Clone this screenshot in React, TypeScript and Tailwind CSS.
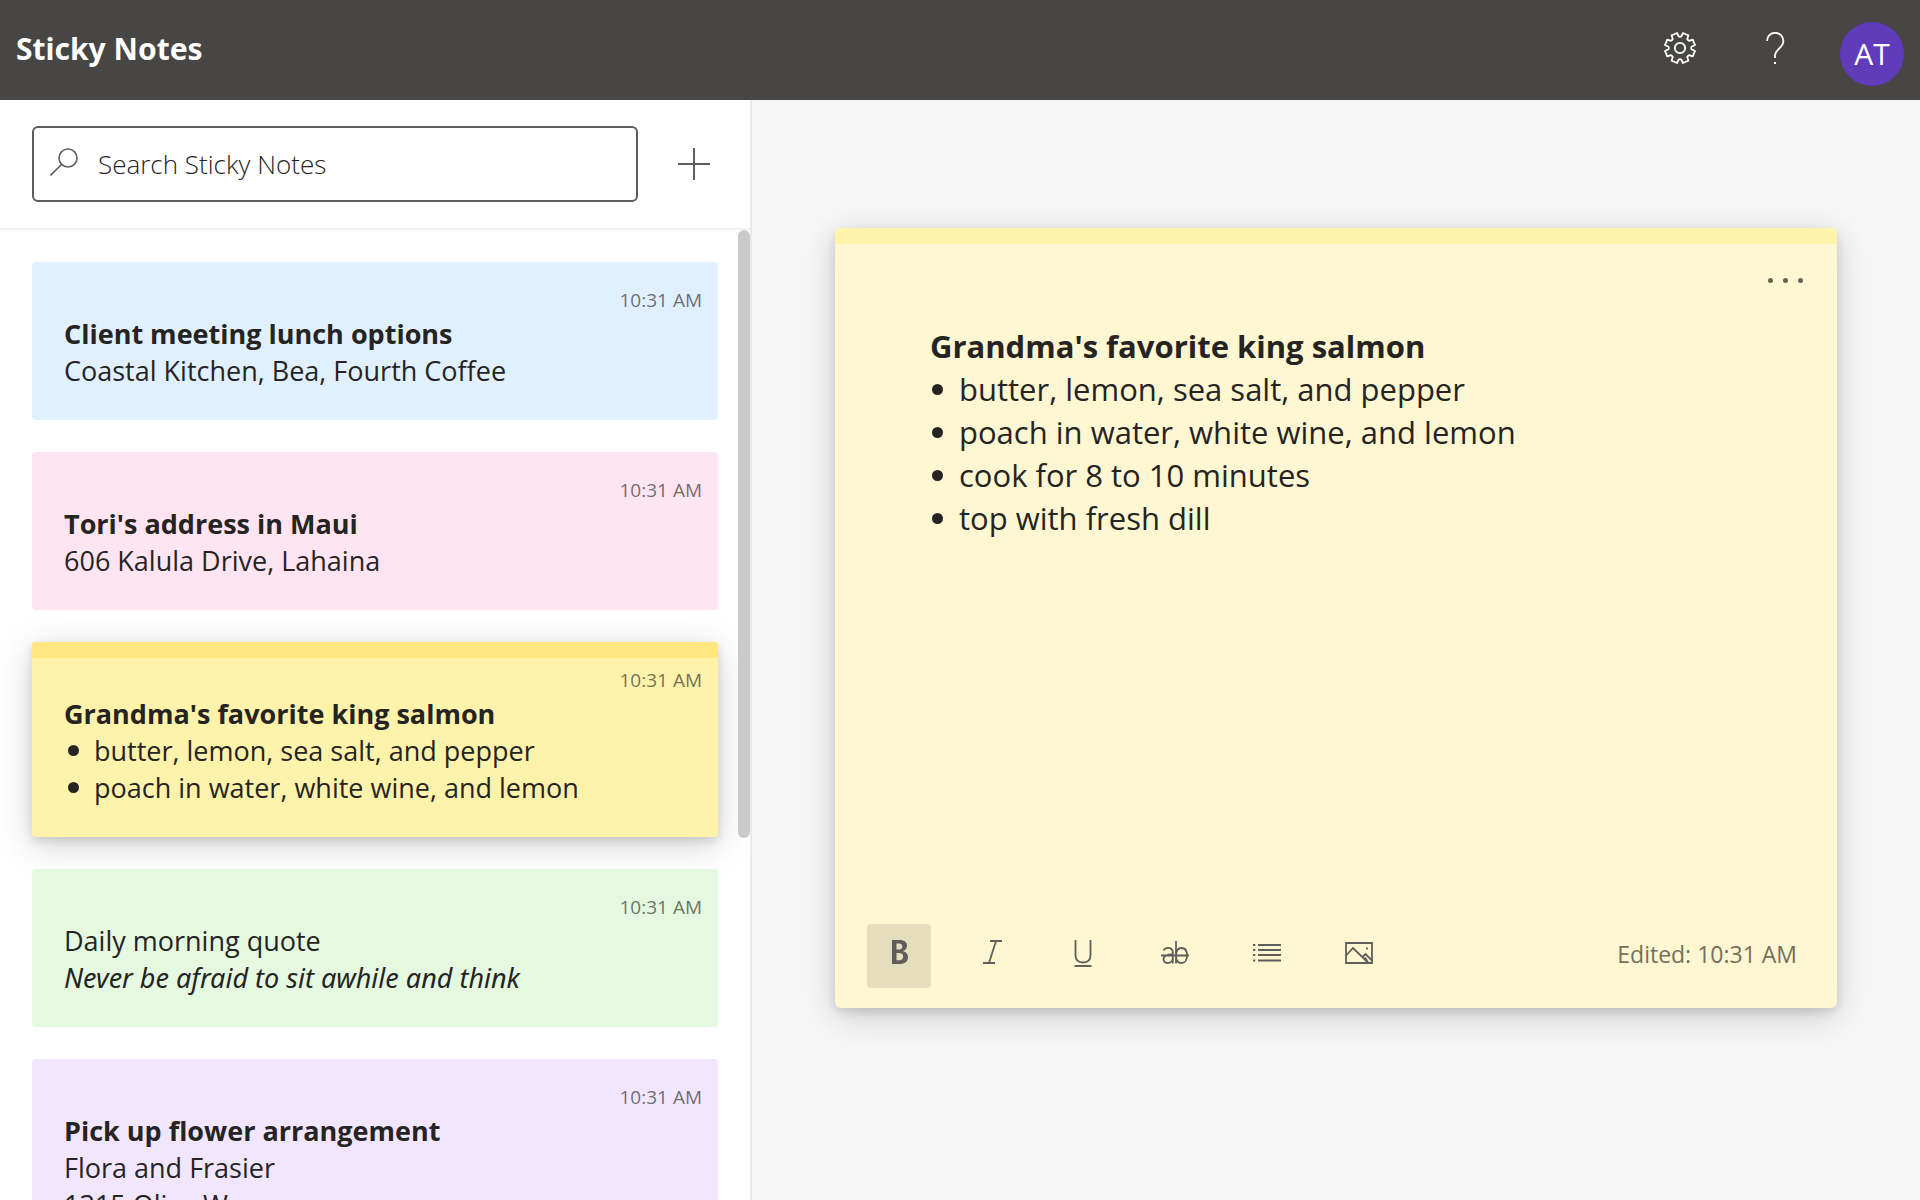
import React from "react";

type Note = {
  color: string;
  strip?: string;
  lines: { text: string; style?: "bold" | "italic" }[];
  bullets?: string[];
};

const notes: Note[] = [
  {
    color: "bg-[#e0f0ff]",
    lines: [{ text: "Client meeting lunch options", style: "bold" }, { text: "Coastal Kitchen, Bea, Fourth Coffee" }],
  },
  {
    color: "bg-[#ffe4f1]",
    lines: [{ text: "Tori's address in Maui", style: "bold" }, { text: "606 Kalula Drive, Lahaina" }],
  },
  {
    color: "bg-[#fff2ab]",
    strip: "bg-[#ffe881]",
    lines: [{ text: "Grandma's favorite king salmon", style: "bold" }],
    bullets: ["butter, lemon, sea salt, and pepper", "poach in water, white wine, and lemon"],
  },
  {
    color: "bg-[#e4f9e0]",
    lines: [{ text: "Daily morning quote" }, { text: "Never be afraid to sit awhile and think", style: "italic" }],
  },
  {
    color: "bg-[#f2e6ff]",
    lines: [
      { text: "Pick up flower arrangement", style: "bold" },
      { text: "Flora and Frasier" },
      { text: "1315 Olive Way" },
    ],
  },
];

const shadow = "shadow-[0_8px_36px_rgba(0,0,0,0.18),0_4px_10px_rgba(0,0,0,0.12)]";

function gearPath() {
  const n = 8;
  const pts: string[] = [];
  const at = (r: number, deg: number) => {
    const a = (deg * Math.PI) / 180;
    return `${(16 + r * Math.cos(a)).toFixed(2)} ${(16 + r * Math.sin(a)).toFixed(2)}`;
  };
  for (let i = 0; i < n; i++) {
    const c = 22.5 + i * (360 / n);
    pts.push(at(15.3, c - 11), at(14.9, c), at(15.3, c + 11), at(11.6, c + 16), at(11.2, c + 22.5), at(11.6, c + 29));
  }
  return `M${pts.join("L")}Z`;
}

function GearIcon() {
  return (
    <svg className="size-8" viewBox="0 0 32 32" fill="none" stroke="currentColor" strokeWidth="1.8" strokeLinejoin="round" aria-hidden="true">
      <path d={gearPath()} />
      <circle cx="16" cy="16" r="5.2" />
    </svg>
  );
}

function HelpIcon() {
  return (
    <svg className="size-8" viewBox="0 0 32 32" fill="none" stroke="currentColor" strokeWidth="1.8" aria-hidden="true">
      <path d="M7 9a8.200 8.200 0 0 1 16.400 0c0 3.600-1.800 5-4.600 7.800C16.200 19.400 15 20.800 15 23.500V26" />
      <path d="M15 30v2" strokeWidth="2" />
    </svg>
  );
}

function SearchIcon() {
  return (
    <svg className="mb-1 size-7 shrink-0" viewBox="0 0 28 28" fill="none" stroke="currentColor" strokeWidth="1.6" aria-hidden="true">
      <circle cx="18" cy="10" r="9" />
      <path d="M11.700 16.300 0.500 27.500" />
    </svg>
  );
}

function BulletList({ items, dot }: { items: string[]; dot: string }) {
  return (
    <ul>
      {items.map((b) => (
        <li key={b} className="flex items-center">
          <span className={`size-[11px] shrink-0 rounded-full bg-[#252423] ${dot}`} />
          {b}
        </li>
      ))}
    </ul>
  );
}

function NoteCard({ note }: { note: Note }) {
  return (
    <li
      className={`shrink-0 overflow-hidden rounded-[4px] pb-[31px] text-[27px] leading-[37px] ${note.color} ${note.strip ? shadow : ""}`}
    >
      <div className={`h-4 ${note.strip ?? ""}`} />
      <time className="block pt-2 pr-4 text-right text-[19px] leading-7 text-[#252423]/65">10:31 AM</time>
      <div className="px-8 pt-px">
        {note.lines.map((l) => (
          <p
            key={l.text}
            className={l.style === "bold" ? "font-bold" : l.style === "italic" ? "font-['Noto_Sans',sans-serif] italic" : ""}
          >
            {l.text}
          </p>
        ))}
        {note.bullets && <BulletList items={note.bullets} dot="ml-1 mr-[15px]" />}
      </div>
    </li>
  );
}

const tools = [
  {
    label: "Bold",
    icon: (
      <path
        fill="currentColor"
        stroke="none"
        fillRule="evenodd"
        d="M9 4h7.500c5 0 7.500 2.200 7.500 5.800 0 2.700-1.500 4.600-4 5.400 3.200.6 5 2.700 5 5.700 0 4.300-3.200 7.100-8.500 7.100H9zM13.500 7.600v6h2.200c2.300 0 3.600-1.100 3.600-3.100 0-1.900-1.200-2.900-3.600-2.900zM13.500 17v7.300h2.700c2.600 0 4-1.300 4-3.700 0-2.300-1.500-3.600-4.200-3.600z"
      />
    ),
  },
  {
    label: "Italic",
    icon: <path d="M15 5h12M8 27h12M21 5l-7 22" />,
  },
  {
    label: "Underline",
    icon: <path d="M8.500 4v15c0 5 2.800 7.500 7.500 7.500s7.500-2.500 7.500-7.500V4M7.500 30h17" />,
  },
  {
    label: "Strikethrough",
    icon: (
      <path d="M4.500 14.500c1-1.700 2.600-2.600 4.600-2.600 3.300 0 4.700 1.900 4.700 4.800V27.500M13.800 18.200c-5 .2-9.300.8-9.300 4.900 0 2.500 1.600 3.900 4 3.900 3.200 0 5.300-2.400 5.300-5.600M17 5v22.500M17 20c0-5 2-8 5.500-8s5.500 3 5.500 7.400-2 7.600-5.500 7.600S17 25 17 20M2 19.500h28" />
    ),
  },
  {
    label: "Bulleted list",
    icon: <path d="M2 9h2.300M7 9h23M2 14h2.300M7 14h23M2 19h2.300M7 19h23M2 24.500h2.300M7 24.500h23" />,
  },
  {
    label: "Add image",
    icon: (
      <>
        <path d="M3 7h26v20H3zM3 19.500l7-7.500 15.500 15M19 21.500l3.500-3.500 6.500 6.500M22 21.500l3 5" />
        <path d="M23 12.500h1.800" />
      </>
    ),
  },
];

export default function App() {
  return (
    <div className="flex h-screen flex-col overflow-hidden bg-[#f7f7f7] font-['Open_Sans','Noto_Sans',sans-serif] text-[#252423]">
      <header className="flex h-[100px] shrink-0 items-start justify-between bg-[#484644] px-4 text-white">
        <h1 className="pt-[29px] font-['Noto_Sans',sans-serif] text-[30px] leading-[40px] font-bold">Sticky Notes</h1>
        <div className="flex items-start">
          <button type="button" aria-label="Settings" className="mt-8 mr-16">
            <GearIcon />
          </button>
          <button type="button" aria-label="Help" className="mt-8 mr-12">
            <HelpIcon />
          </button>
          <button
            type="button"
            aria-label="Account"
            className="mt-[22px] flex size-16 items-center justify-center rounded-full bg-[#603cba] pb-0.5 text-[30px]"
          >
            AT
          </button>
        </div>
      </header>

      <main className="flex min-h-0 flex-1">
        <section className="flex w-[752px] shrink-0 flex-col border-r-2 border-[#eaeaea] bg-white">
          <div className="flex items-center border-b-2 border-[#f3f2f1] py-[26px] pl-8">
            <label className="flex h-[76px] flex-1 items-center gap-5 rounded-md border-2 border-[#5f5d5b] px-4 text-[#605e5c]">
              <SearchIcon />
              <input
                type="text"
                aria-label="Search Sticky Notes"
                placeholder="Search Sticky Notes"
                className="min-w-0 flex-1 text-[26px] font-light outline-none placeholder:text-[#252423]"
              />
            </label>
            <button type="button" aria-label="New note" className="mx-10 text-[#605e5c]">
              <svg className="size-8" viewBox="0 0 32 32" stroke="currentColor" strokeWidth="2" aria-hidden="true">
                <path d="M16 0v32M0 16h32" />
              </svg>
            </button>
          </div>
          <div className="flex min-h-0 flex-1 overflow-hidden">
            <ul className="flex min-w-0 flex-1 flex-col gap-8 pt-8 pr-5 pl-8">
              {notes.map((n) => (
                <NoteCard key={n.lines[0].text} note={n} />
              ))}
            </ul>
            <div className="h-[608px] w-3 rounded-full bg-[#cacaca]" />
          </div>
        </section>

        <section className="flex min-w-0 flex-1 items-start px-[83px] pt-32">
          <article
            className={`flex min-h-[780px] flex-1 flex-col overflow-hidden rounded-[6px] bg-[#fff7d1] ${shadow}`}
          >
            <div className="h-4 bg-[#fff2ab]" />
            <div className="flex justify-end pt-7 pr-8">
              <button type="button" aria-label="Menu" className="flex gap-[10px] px-0.5 py-1.5">
                <span className="size-[5px] rounded-full bg-[#666353]" />
                <span className="size-[5px] rounded-full bg-[#666353]" />
                <span className="size-[5px] rounded-full bg-[#666353]" />
              </button>
            </div>
            <div className="flex-1 px-[95px] pt-9 text-[31px] leading-[43px]">
              <h2 className="font-bold">Grandma's favorite king salmon</h2>
              <BulletList
                items={[
                  "butter, lemon, sea salt, and pepper",
                  "poach in water, white wine, and lemon",
                  "cook for 8 to 10 minutes",
                  "top with fresh dill",
                ]}
                dot="ml-0.5 mr-4"
              />
            </div>
            <footer className="flex items-center justify-between px-8 pb-5">
              <div className="flex gap-7">
                {tools.map((t, i) => (
                  <button
                    key={t.label}
                    type="button"
                    aria-label={t.label}
                    aria-pressed={i === 0}
                    className={`flex size-16 items-center justify-center rounded-[4px] pb-2 text-[#605e5c] ${i === 0 ? "bg-[#e5debc]" : ""}`}
                  >
                    <svg className="size-8" viewBox="0 0 32 32" fill="none" stroke="currentColor" strokeWidth="1.8" aria-hidden="true">
                      {t.icon}
                    </svg>
                  </button>
                ))}
              </div>
              <p className="pr-2 pb-1 text-[23px] text-[#736f5e]">Edited: 10:31 AM</p>
            </footer>
          </article>
        </section>
      </main>
    </div>
  );
}
